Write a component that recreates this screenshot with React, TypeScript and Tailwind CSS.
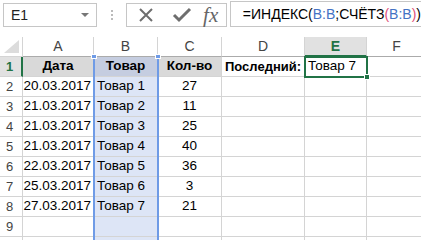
import React from 'react';

const COLS = [
  { key: 'A', w: 71 },
  { key: 'B', w: 64 },
  { key: 'C', w: 64 },
  { key: 'D', w: 83 },
  { key: 'E', w: 62 },
  { key: 'F', w: 60 },
];

const DATA: [string, string, string][] = [
  ['20.03.2017', 'Товар 1', '27'],
  ['21.03.2017', 'Товар 2', '11'],
  ['21.03.2017', 'Товар 3', '25'],
  ['21.03.2017', 'Товар 4', '40'],
  ['22.03.2017', 'Товар 5', '36'],
  ['25.03.2017', 'Товар 6', '3'],
  ['27.03.2017', 'Товар 7', '21'],
  ['', '', ''],
  ['', '', ''],
];

const cell = 'h-[20px] shrink-0 border-r border-b border-[#d4d4d4] flex items-center overflow-hidden whitespace-nowrap';

function RowHead({ n, active }: { n: number; active?: boolean }) {
  return (
    <div
      className={`${cell} w-[23px] pl-[6px] text-[13px] ${
        active ? 'bg-[#e1e1e1] text-[#217346] font-bold border-r-2 border-r-[#217346]' : 'bg-white text-[#444]'
      }`}
    >
      {n < 10 ? n : ''}
    </div>
  );
}

export default function App() {
  return (
    <div
      className="w-[421px] h-[240px] overflow-hidden bg-white relative text-black"
      style={{ fontFamily: '"Liberation Sans", Arial, sans-serif' }}
    >
      {/* formula bar */}
      <div className="h-[37px] flex items-start pt-[3px] pl-[3px]">
        <div className="w-[101px] h-[24px] border border-[#c6c6c6] flex items-center justify-between pl-[7px] pr-[7px] text-[14px] text-[#222]">
          <span>E1</span>
          <span className="w-0 h-0 border-l-[4px] border-r-[4px] border-t-[4px] border-l-transparent border-r-transparent border-t-[#777]" />
        </div>
        <div className="w-[31px] h-[24px] flex flex-col items-center justify-center gap-[2px]">
          <span className="w-[2px] h-[2px] bg-[#bbb]" />
          <span className="w-[2px] h-[2px] bg-[#bbb]" />
          <span className="w-[2px] h-[2px] bg-[#bbb]" />
        </div>
        <div className="w-[109px] h-[24px] border border-[#c6c6c6] flex items-center">
          <svg width="36" height="22" viewBox="0 0 36 22" className="ml-[1px]">
            <path d="M12 5 L24 17 M24 5 L12 17" stroke="#6e6e6e" strokeWidth="2" fill="none" />
          </svg>
          <svg width="36" height="22" viewBox="0 0 36 22">
            <path d="M10 11 L15 16 L26 5" stroke="#6e6e6e" strokeWidth="3" fill="none" />
          </svg>
          <span
            className="ml-[3px] text-[21px] italic text-[#666] leading-none"
            style={{ fontFamily: '"Liberation Serif", "Times New Roman", serif' }}
          >
            fx
          </span>
        </div>
        <div className="ml-[3px] flex-1 h-[26px] -mt-[2px] border border-r-0 border-[#c6c6c6] flex items-center pl-[12px] text-[14px] whitespace-nowrap">
          <span>=ИНДЕКС(</span>
          <span className="text-[#4472c4]">B:B</span>
          <span>;СЧЁТЗ</span>
          <span className="text-[#e0507a]">(</span>
          <span className="text-[#4472c4]">B:B</span>
          <span className="text-[#e0507a]">)</span>
          <span>)</span>
        </div>
      </div>

      {/* column headers */}
      <div className="flex h-[20px]">
        <div className="w-[23px] h-[20px] shrink-0 border-r border-b border-[#d4d4d4] relative bg-white">
          <svg width="15" height="13" className="absolute right-[3px] bottom-[3px]">
            <path d="M15 0 L15 13 L0 13 Z" fill="#dcdcdc" />
          </svg>
        </div>
        {COLS.map((c) => (
          <div
            key={c.key}
            style={{ width: c.w }}
            className={`h-[20px] shrink-0 border-r border-[#d4d4d4] flex items-center justify-center text-[14px] ${
              c.key === 'E'
                ? 'bg-[#e1e1e1] text-[#217346] font-bold border-b-2 border-b-[#217346]'
                : 'bg-white text-[#444] border-b border-b-[#ababab]'
            }`}
          >
            {c.key}
          </div>
        ))}
      </div>

      {/* row 1 */}
      <div className="flex text-[13.5px]">
        <RowHead n={1} active />
        <div className={`${cell} w-[71px] bg-[#d9d9d9] justify-center font-bold`}>Дата</div>
        <div className={`${cell} w-[64px] bg-[#c5cde0] justify-center font-bold`}>Товар</div>
        <div className={`${cell} w-[64px] bg-[#d9d9d9] justify-center font-bold`}>Кол-во</div>
        <div className={`${cell} w-[83px] pl-[3px] font-bold text-[13px]`}>Последний:</div>
        <div className={`${cell} w-[62px] pl-[3px]`}>Товар 7</div>
        <div className={`${cell} w-[60px]`} />
      </div>

      {DATA.map((r, i) => (
        <div key={i} className="flex text-[13.5px]">
          <RowHead n={i + 2} />
          <div className={`${cell} w-[71px] justify-end pr-[2px]`}>{r[0]}</div>
          <div className={`${cell} w-[64px] bg-[#dde5f6] pl-[3px]`}>{r[1]}</div>
          <div className={`${cell} w-[64px] justify-center`}>{r[2]}</div>
          <div className={`${cell} w-[83px]`} />
          <div className={`${cell} w-[62px]`} />
          <div className={`${cell} w-[60px]`} />
        </div>
      ))}

      {/* column B selection */}
      <div className="absolute left-[93px] top-[57px] w-[66px] h-[200px] border-x-2 border-[#6f9be6] pointer-events-none">
        <span className="absolute -left-[4px] -top-[3px] w-[6px] h-[5px] bg-[#6f9be6] border border-white" />
        <span className="absolute -right-[4px] -top-[3px] w-[6px] h-[5px] bg-[#6f9be6] border border-white" />
      </div>

      {/* active cell E1 */}
      <div className="absolute left-[304px] top-[56px] w-[64px] h-[22px] border-2 border-[#217346] pointer-events-none">
        <span className="absolute -right-[4px] -bottom-[4px] w-[6px] h-[6px] bg-[#217346] border border-white" />
      </div>
    </div>
  );
}
